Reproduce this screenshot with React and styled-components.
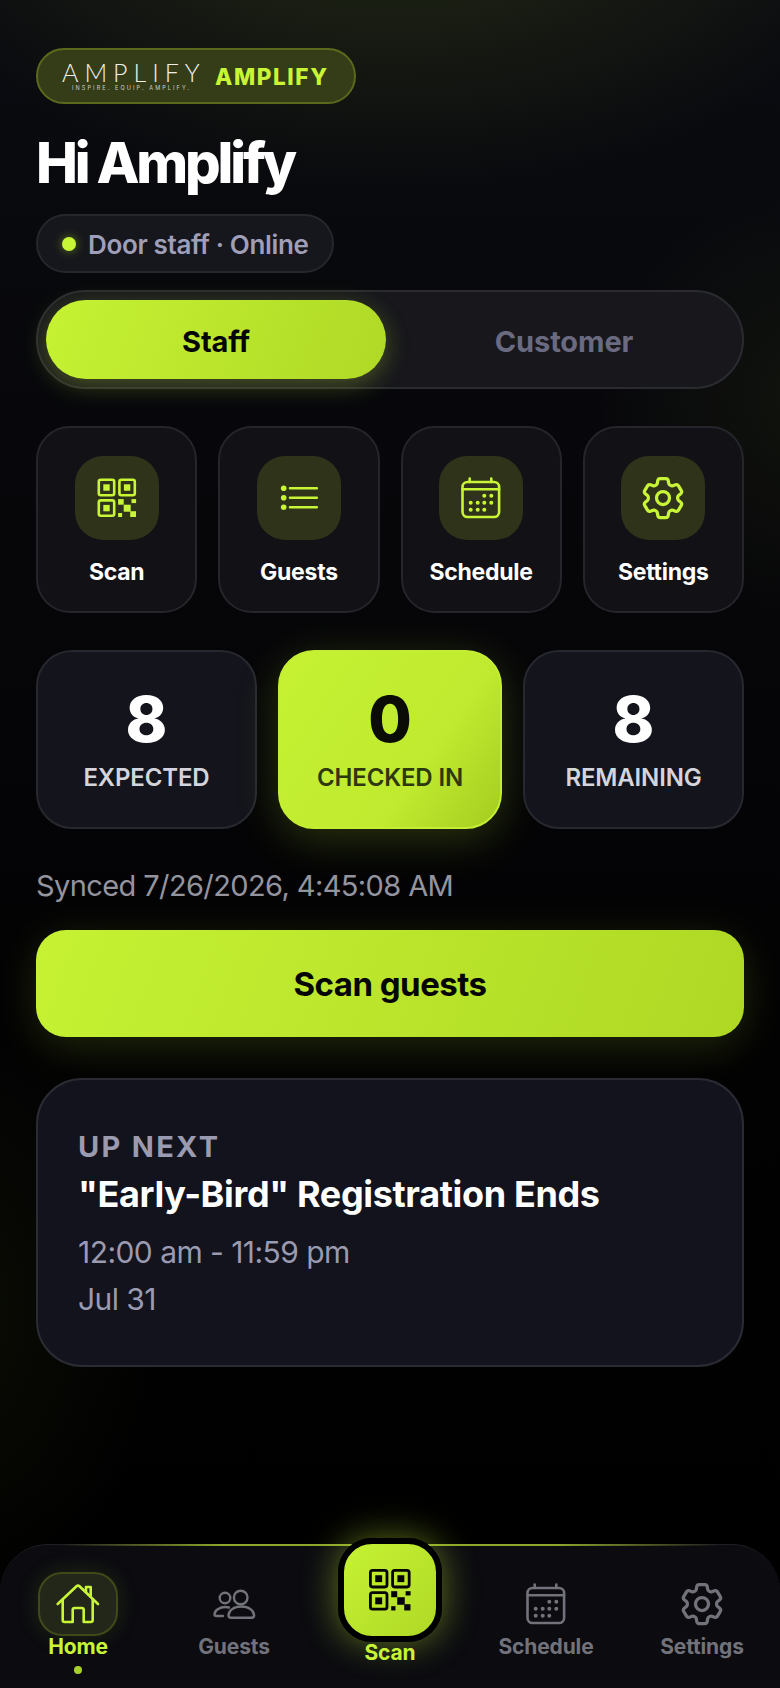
import styled, { createGlobalStyle } from "styled-components";
import { HiOutlineCog6Tooth } from "react-icons/hi2";

const LIME = "#c8f535";
const FONT = `Inter, "Noto Sans", sans-serif`;

// all the line icons share a 52 box
const Glyph = ({ size = 52, stroke = 2.6, children }) => (
  <svg width={size} height={size} viewBox="0 0 52 52" fill="none" stroke="currentColor" strokeWidth={stroke} strokeLinecap="round" strokeLinejoin="round">
    {children}
  </svg>
);

const QrIcon = ({ size }) => (
  <Glyph size={size}>
    <rect x="7.8" y="7.800" width="15.400" height="15.400" rx="2" />
    <rect x="28.400" y="7.800" width="15.400" height="15.400" rx="2" />
    <rect x="7.800" y="28.400" width="15.400" height="15.400" rx="2" />
    <g fill="currentColor" stroke="none">
      <rect x="12.300" y="12.300" width="6.400" height="6.400" />
      <rect x="32.900" y="12.300" width="6.400" height="6.400" />
      <rect x="12.300" y="32.900" width="6.400" height="6.400" />
      <rect x="27.100" y="27.100" width="5.600" height="5.600" />
      <rect x="40.500" y="27.100" width="4.600" height="4" />
      <rect x="32.700" y="32.700" width="7" height="7" />
      <rect x="39.200" y="39.200" width="5.800" height="5.800" />
      <rect x="27.100" y="41" width="4" height="4" />
    </g>
  </Glyph>
);

const ListIcon = ({ size }) => (
  <Glyph size={size}>
    <path d="M17 16.300h26.800M17 25.700h26.800M17 35.300h26.800" />
    <g fill="currentColor" stroke="none">
      <circle cx="10.700" cy="16.300" r="2.800" />
      <circle cx="10.700" cy="25.700" r="2.800" />
      <circle cx="10.700" cy="35.300" r="2.800" />
    </g>
  </Glyph>
);

const calendarDots = [
  [29.3, 23.7],
  [36.3, 23.7],
  [15.7, 30.7],
  [22.7, 30.7],
  [29.3, 30.7],
  [36.3, 30.7],
  [15.7, 37.7],
  [22.7, 37.7],
  [29.3, 37.7],
];

const CalendarIcon = ({ size }) => (
  <Glyph size={size}>
    <rect x="7.500" y="10" width="36.600" height="35" rx="5" />
    <path d="M7.500 17.300h36.600M14.700 6.500v3.500M36.300 6.500v3.500" />
    <g fill="currentColor" stroke="none">
      {calendarDots.map(([cx, cy]) => (
        <circle key={`${cx}-${cy}`} cx={cx} cy={cy} r="2" />
      ))}
    </g>
  </Glyph>
);

const HomeIcon = ({ size }) => (
  <Glyph size={size}>
    <path d="M5.700 26 24.500 8.200c.9-.8 2.100-.8 3 0L46 26" />
    <path d="M10.700 21.500V42c0 1.200.8 2 2 2h8V32c0-1.200.8-2 2-2h7c1.200 0 2 .8 2 2v12h7c1.200 0 2-.8 2-2V21.500" />
    <path d="M34 14V9h4.700v9.500" />
  </Glyph>
);

const GuestsIcon = ({ size }) => (
  <Glyph size={size} stroke={2.4}>
    <circle cx="17" cy="20" r="5.300" />
    <circle cx="32.700" cy="19.500" r="6.800" />
    <path d="M20.500 37.500c0-5 5.500-9 12.800-9s12.800 4 12.800 9c0 1.500-1 2.200-2.500 2.200H23c-1.500 0-2.500-.7-2.500-2.200z" />
    <path d="M21 29.500c-1-.3-2-.5-3.500-.5-6 0-11 3.500-11 7.500 0 1 .8 1.500 2 1.500H15" />
  </Glyph>
);

const quickLinks = [
  { label: "Scan", Icon: QrIcon },
  { label: "Guests", Icon: ListIcon },
  { label: "Schedule", Icon: CalendarIcon },
  { label: "Settings", Icon: HiOutlineCog6Tooth },
];

const stats = [
  { value: 8, label: "EXPECTED" },
  { value: 0, label: "CHECKED IN", active: true },
  { value: 8, label: "REMAINING" },
];

export default function App() {
  return (
    <>
      <GlobalStyle />
      <Page>
        <Content>
          <LogoPill>
            <LogoMark>
              <LogoWord>AMPLIFY</LogoWord>
              <LogoTag>INSPIRE. EQUIP. AMPLIFY.</LogoTag>
            </LogoMark>
            <LogoName>AMPLIFY</LogoName>
          </LogoPill>
          <Title>Hi Amplify</Title>
          <StatusPill>
            <StatusDot />
            Door staff · Online
          </StatusPill>
          <Toggle>
            <ToggleOption $active>Staff</ToggleOption>
            <ToggleOption>Customer</ToggleOption>
          </Toggle>
          <Tiles>
            {quickLinks.map(({ label, Icon }) => (
              <Tile key={label}>
                <TileIcon>
                  <Icon size={52} />
                </TileIcon>
                <TileLabel>{label}</TileLabel>
              </Tile>
            ))}
          </Tiles>
          <Stats>
            {stats.map((s) => (
              <Stat key={s.label} $active={s.active}>
                <StatValue $active={s.active}>{s.value}</StatValue>
                <StatLabel $active={s.active}>{s.label}</StatLabel>
              </Stat>
            ))}
          </Stats>
          <Synced>Synced 7/26/2026, 4:45:08 AM</Synced>
          <ScanButton>Scan guests</ScanButton>
          <NextCard>
            <NextLabel>UP NEXT</NextLabel>
            <NextTitle>"Early-Bird" Registration Ends</NextTitle>
            <NextTime>12:00 am - 11:59 pm</NextTime>
            <NextDate>Jul 31</NextDate>
          </NextCard>
        </Content>
        <BottomNav>
          <NavItem>
            <NavIconBox $active>
              <HomeIcon size={52} />
            </NavIconBox>
            <NavLabel $active>Home</NavLabel>
            <NavDot />
          </NavItem>
          <NavItem>
            <NavIconBox>
              <GuestsIcon size={52} />
            </NavIconBox>
            <NavLabel>Guests</NavLabel>
          </NavItem>
          <NavItem>
            <ScanFab>
              <QrIcon size={56} />
            </ScanFab>
            <NavLabel $active>Scan</NavLabel>
          </NavItem>
          <NavItem>
            <NavIconBox>
              <CalendarIcon size={52} />
            </NavIconBox>
            <NavLabel>Schedule</NavLabel>
          </NavItem>
          <NavItem>
            <NavIconBox>
              <HiOutlineCog6Tooth size={52} />
            </NavIconBox>
            <NavLabel>Settings</NavLabel>
          </NavItem>
        </BottomNav>
      </Page>
    </>
  );
}

const GlobalStyle = createGlobalStyle`
  * {
    box-sizing: border-box;
  }
  body {
    margin: 0;
    background: #000;
    font-family: ${FONT};
  }
`;

const Page = styled.div`
  width: 780px;
  height: 1688px;
  display: flex;
  flex-direction: column;
  justify-content: space-between;
  overflow: hidden;
  color: #fff;
  background:
    radial-gradient(700px 440px at 50% -8%, rgba(200, 245, 53, 0.14), transparent 75%),
    radial-gradient(300px 300px at 105% 24%, rgba(200, 245, 53, 0.05), transparent 75%),
    radial-gradient(300px 400px at -8% 78%, rgba(200, 245, 53, 0.05), transparent 75%),
    linear-gradient(180deg, #0a0b10 0%, #060609 35%, #020203 60%, #000 100%);
`;

const Content = styled.div`
  display: flex;
  flex-direction: column;
  align-items: flex-start;
  padding: 48px 36px 0;
`;

const LogoPill = styled.div`
  width: 320px;
  height: 56px;
  display: flex;
  align-items: center;
  padding-left: 24px;
  border: 2px solid #5a6a1d;
  border-radius: 28px;
  background: #343c18;
`;

const LogoMark = styled.div`
  width: 153px;
  display: flex;
  flex-direction: column;
  align-items: flex-start;
`;

const LogoWord = styled.span`
  font-family: Lato, sans-serif;
  font-weight: 300;
  font-size: 25px;
  line-height: 24px;
  letter-spacing: 6px;
  color: #eef0e6;
  white-space: nowrap;
`;

const LogoTag = styled.span`
  margin-left: 10px;
  font-size: 5.5px;
  line-height: 9px;
  letter-spacing: 2.1px;
  color: #cfd2c4;
  white-space: nowrap;
`;

const LogoName = styled.span`
  font-weight: 800;
  font-size: 22.500px;
  letter-spacing: 1.6px;
  color: ${LIME};
`;

const Title = styled.h1`
  margin: 24px 0 0;
  font-size: 56px;
  line-height: 70px;
  font-weight: 800;
  letter-spacing: -3.2px;
  color: #fff;
`;

const StatusPill = styled.div`
  height: 59px;
  width: 298px;
  margin-top: 16px;
  display: flex;
  align-items: center;
  gap: 12px;
  padding: 1px 0 0 24px;
  border: 2px solid #26272d;
  border-radius: 30px;
  background: #16171c;
  font-size: 26px;
  font-weight: 600;
  letter-spacing: -0.35px;
  color: #a09fb8;
  white-space: nowrap;
`;

const StatusDot = styled.span`
  width: 14px;
  height: 14px;
  border-radius: 50%;
  background: ${LIME};
  box-shadow: 0 0 10px rgba(200, 245, 53, 0.45);
`;

const Toggle = styled.div`
  width: 708px;
  height: 99px;
  margin-top: 17px;
  display: grid;
  grid-template-columns: 340px 1fr;
  align-items: stretch;
  padding: 8px;
  border: 2px solid #2a2b30;
  border-radius: 50px;
  background: #17171c;
`;

const ToggleOption = styled.div`
  display: flex;
  align-items: center;
  justify-content: center;
  padding-left: ${(p) => (p.$active ? "0" : "8px")};
  padding-top: 3px;
  border-radius: 40px;
  font-size: 29px;
  font-weight: 700;
  letter-spacing: -0.1px;
  color: ${(p) => (p.$active ? "#050505" : "#6a6a80")};
  background: ${(p) => (p.$active ? "linear-gradient(110deg, #c6f233, #afd926)" : "transparent")};
  box-shadow: ${(p) => (p.$active ? "0 6px 24px rgba(200, 245, 53, 0.28)" : "none")};
`;

const Tiles = styled.div`
  width: 708px;
  margin-top: 37px;
  display: grid;
  grid-template-columns: repeat(4, 1fr);
  gap: 21px;
`;

const Tile = styled.div`
  height: 187px;
  display: flex;
  flex-direction: column;
  align-items: center;
  padding-top: 28px;
  border: 2px solid #25262b;
  border-radius: 34px;
  background: #111116;
`;

const TileIcon = styled.div`
  width: 84px;
  height: 84px;
  display: flex;
  align-items: center;
  justify-content: center;
  border-radius: 28px;
  background: #2f331a;
  color: ${LIME};
`;

const TileLabel = styled.div`
  margin-top: 18px;
  font-size: 23px;
  line-height: 28px;
  font-weight: 700;
  letter-spacing: -0.25px;
  color: #fff;
`;

const Stats = styled.div`
  width: 708px;
  margin-top: 37px;
  display: grid;
  grid-template-columns: 221px 1fr 221px;
  gap: 21px;
`;

const Stat = styled.div`
  height: 179px;
  display: flex;
  flex-direction: column;
  align-items: center;
  padding-top: 34px;
  border: 2px solid ${(p) => (p.$active ? "#c4ee34" : "#27282f")};
  border-radius: 36px;
  background: ${(p) => (p.$active ? "linear-gradient(125deg, #c6f233 0%, #bfea2f 65%, #a4cc20 100%)" : "#13141c")};
  box-shadow: ${(p) => (p.$active ? "0 10px 44px rgba(200, 245, 53, 0.2)" : "none")};
`;

const StatValue = styled.div`
  font-size: 63px;
  line-height: 66px;
  font-weight: 800;
  color: ${(p) => (p.$active ? "#0a0c05" : "#fff")};
`;

const StatLabel = styled.div`
  margin-top: 11px;
  font-size: 24px;
  line-height: 30px;
  font-weight: 600;
  letter-spacing: -0.15px;
  color: ${(p) => (p.$active ? "#2e380c" : "#d4d4dc")};
`;

const Synced = styled.div`
  margin-top: 37px;
  font-size: 29px;
  line-height: 40px;
  font-weight: 400;
  letter-spacing: -0.6px;
  color: #94949f;
`;

const ScanButton = styled.div`
  width: 708px;
  height: 107px;
  margin-top: 24px;
  display: flex;
  align-items: center;
  justify-content: center;
  border-radius: 30px;
  background: linear-gradient(110deg, #c6f233, #aed824);
  box-shadow: 0 10px 44px rgba(200, 245, 53, 0.16);
  font-size: 33px;
  font-weight: 700;
  letter-spacing: -0.5px;
  color: #050505;
`;

const NextCard = styled.div`
  width: 708px;
  height: 289px;
  margin-top: 41px;
  display: flex;
  flex-direction: column;
  padding: 49px 40px 0;
  border: 2px solid #2a2b33;
  border-radius: 46px;
  background: #12131c;
`;

const NextLabel = styled.div`
  font-size: 29px;
  line-height: 36px;
  font-weight: 700;
  letter-spacing: 2.3px;
  color: #9a9ab0;
`;

const NextTitle = styled.div`
  margin-top: 6px;
  font-size: 36px;
  line-height: 46px;
  font-weight: 700;
  letter-spacing: -0.35px;
  color: #fff;
`;

const NextTime = styled.div`
  margin-top: 14px;
  font-size: 30px;
  line-height: 42px;
  font-weight: 400;
  letter-spacing: -0.55px;
  color: #9a9ab0;
`;

const NextDate = styled(NextTime)`
  margin-top: 5px;
`;

const BottomNav = styled.nav`
  position: relative;
  height: 144px;
  display: grid;
  grid-template-columns: repeat(5, 156px);
  padding-top: 27px;
  border-top: 1px solid #1f1f25;
  border-radius: 48px 48px 0 0;
  background: #0b0b10;

  &::before {
    content: "";
    position: absolute;
    top: -1px;
    left: 60px;
    right: 60px;
    height: 2px;
    background: linear-gradient(90deg, transparent, #8fa82c 25%, #8fa82c 75%, transparent);
  }
`;

const NavItem = styled.div`
  display: flex;
  flex-direction: column;
  align-items: center;
`;

const NavIconBox = styled.div`
  width: 80px;
  height: 64px;
  display: flex;
  align-items: center;
  justify-content: center;
  border: 2px solid ${(p) => (p.$active ? "#3f4a1a" : "transparent")};
  border-radius: 24px;
  background: ${(p) => (p.$active ? "#23271a" : "transparent")};
  box-shadow: ${(p) => (p.$active ? "0 0 24px rgba(200, 245, 53, 0.12)" : "none")};
  color: ${(p) => (p.$active ? LIME : "#72727a")};
`;

const NavLabel = styled.div`
  font-size: 21px;
  line-height: 22px;
  font-weight: 700;
  letter-spacing: -0.15px;
  color: ${(p) => (p.$active ? LIME : "#72727a")};
`;

const NavDot = styled.span`
  width: 8px;
  height: 8px;
  margin-top: 8px;
  border-radius: 50%;
  background: #a9cf2c;
`;

const ScanFab = styled.div`
  position: relative;
  z-index: 1;
  width: 104px;
  height: 104px;
  margin-top: -34px;
  display: flex;
  align-items: center;
  justify-content: center;
  border: 6px solid #000;
  border-radius: 34px;
  background: linear-gradient(135deg, #c6f233, #afd926);
  box-shadow: 0 0 36px rgba(200, 245, 53, 0.45);
  color: #050505;
`;
